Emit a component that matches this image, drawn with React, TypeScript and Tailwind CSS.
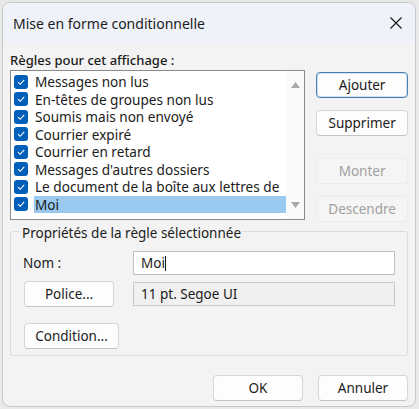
import React from "react";

const items = [
  "Messages non lus",
  "En-têtes de groupes non lus",
  "Soumis mais non envoyé",
  "Courrier expiré",
  "Courrier en retard",
  "Messages d'autres dossiers",
  "Le document de la boîte aux lettres de",
  "Moi",
];

function Check() {
  return (
    <span className="w-[14px] h-[14px] rounded-[3px] bg-[#005fb8] flex items-center justify-center shrink-0">
      <svg width="10" height="10" viewBox="0 0 10 10">
        <path d="M2 5.2 L4.2 7.3 L8.2 2.8" fill="none" stroke="#ffffff" strokeWidth="1.1" />
      </svg>
    </span>
  );
}

function Btn({ children, className = "", disabled = false, focus = false }: { children: React.ReactNode; className?: string; disabled?: boolean; focus?: boolean }) {
  return (
    <div
      className={
        "h-[26px] rounded-[4px] flex items-center justify-center text-[13.5px] " +
        (disabled
          ? "bg-[#f5f5f5] border border-[#ececec] text-[#a0a0a0] "
          : focus
          ? "bg-[#fdfdfd] border border-[#4a7fb0] text-[#1b1b1b] shadow-[inset_0_0_0_1px_#cfe0f0] "
          : "bg-[#fdfdfd] border border-[#d6d6d6] border-b-[#c4c4c4] text-[#1b1b1b] ") +
        className
      }
    >
      {children}
    </div>
  );
}

export default function App() {
  return (
    <div
      className="w-[419px] h-[409px] bg-[#e9e9e9] pt-[2px] pl-[2px]"
      style={{ fontFamily: '"Noto Sans", "Open Sans", sans-serif' }}
    >
      <div className="w-[414px] h-[405px] rounded-[8px] border border-[#c8c8c8] bg-[#f3f3f3] overflow-hidden flex flex-col">
        <div className="h-[40px] bg-[#eff3f9] flex items-center justify-between pl-[10px] pr-[12px] shrink-0">
          <span className="text-[14px] text-[#1b1b1b]">Mise en forme conditionnelle</span>
          <svg width="14" height="14" viewBox="0 0 14 14">
            <path d="M1.5 1.5 L12.5 12.5 M12.5 1.5 L1.5 12.5" stroke="#1b1b1b" strokeWidth="1.2" />
          </svg>
        </div>
        <div className="px-[7px] flex flex-col">
          <div className="text-[13px] text-[#1b1b1b] font-medium mt-[9px] leading-[16px]">Règles pour cet affichage :</div>
          <div className="flex mt-[2px]">
            <div className="w-[296px] h-[150px] border border-[#8a8a8a] bg-white flex">
              <div className="flex-1 pt-[2px] pl-[3px] flex flex-col">
                {items.map((t, i) => (
                  <div key={i} className="h-[17.5px] flex items-center gap-[6px]">
                    <Check />
                    <span
                      className={
                        "flex-1 h-[17px] leading-[17px] text-[13.6px] text-[#1b1b1b] whitespace-nowrap pl-[1px] " +
                        (i === 7 ? "bg-[#99c9ef]" : "")
                      }
                    >
                      {t}
                    </span>
                  </div>
                ))}
              </div>
              <div className="w-[18px] flex flex-col justify-between items-center py-[11px] bg-[#fafafa]">
                <svg width="9" height="6" viewBox="0 0 9 6"><path d="M0 6 L4.5 0 L9 6 Z" fill="#a8a8a8" /></svg>
                <svg width="9" height="6" viewBox="0 0 9 6"><path d="M0 0 L4.5 6 L9 0 Z" fill="#a8a8a8" /></svg>
              </div>
            </div>
            <div className="ml-[11px] flex flex-col w-[92px]">
              <Btn focus className="mt-[2px]">Ajouter</Btn>
              <Btn className="mt-[12px]">Supprimer</Btn>
              <Btn disabled className="mt-[22px]">Monter</Btn>
              <Btn disabled className="mt-[12px]">Descendre</Btn>
            </div>
          </div>
          <div className="mt-[2px] relative">
            <div className="h-[125px] mt-[7px] border border-[#dcdcdc] rounded-[3px] px-[12px] pt-[19px] flex flex-col">
              <div className="flex items-center h-[24px]">
                <span className="w-[110px] text-[13.5px] text-[#1b1b1b]">Nom :</span>
                <div className="flex-1 h-[24px] bg-white border border-[#b9c3cf] flex items-center pl-[7px] text-[13.5px] text-[#1b1b1b]">
                  Moi<span className="w-[1px] h-[15px] bg-[#1b1b1b]"></span>
                </div>
              </div>
              <div className="flex items-center mt-[6px]">
                <Btn className="w-[90px] ml-[1px]">Police...</Btn>
                <div className="ml-[19px] flex-1 h-[24px] bg-[#f0f0f0] border border-[#c8c8c8] flex items-center pl-[7px] text-[13.5px] text-[#1b1b1b]">
                  11 pt. Segoe UI
                </div>
              </div>
              <div className="mt-[16px]">
                <Btn className="w-[95px] ml-[1px]">Condition...</Btn>
              </div>
            </div>
            <span className="absolute left-[10px] top-[1px] px-[2px] bg-[#f3f3f3] text-[13.5px] text-[#1b1b1b] leading-[16px]">
              Propriétés de la règle sélectionnée
            </span>
          </div>
          <div className="flex justify-end gap-[15px] mt-[19px]">
            <Btn className="w-[90px]">OK</Btn>
            <Btn className="w-[90px]">Annuler</Btn>
          </div>
        </div>
      </div>
    </div>
  );
}
